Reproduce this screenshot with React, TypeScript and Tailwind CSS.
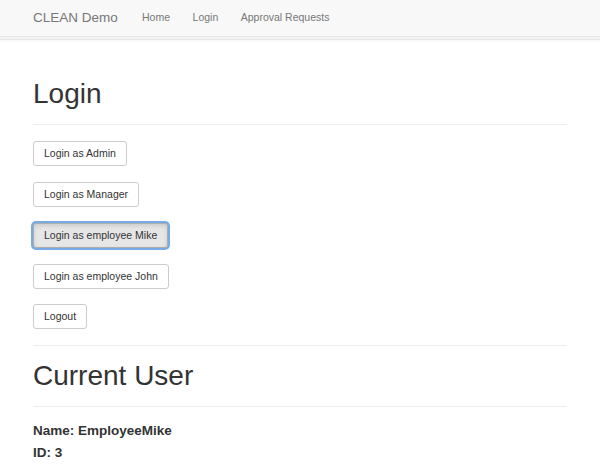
import React from 'react'

const buttons = [
  { label: 'Login as Admin', active: false },
  { label: 'Login as Manager', active: false },
  { label: 'Login as employee Mike', active: true },
  { label: 'Login as employee John', active: false },
  { label: 'Logout', active: false },
]

const navLinks = ['Home', 'Login', 'Approval Requests']

export default function App() {
  return (
    <div className="min-h-[473px] bg-white font-['Liberation_Sans',Arial,sans-serif] text-[#333]">
      {/* Navbar */}
      <div className="flex h-[37px] items-center border-b border-[#e7e7e7] bg-[#f8f8f8] pl-[33px]">
        <span className="text-[13.5px] text-[#777]">CLEAN Demo</span>
        <nav className="ml-[13px] flex items-center">
          {navLinks.map((link) => (
            <a key={link} className="px-[11.25px] text-[10.5px] text-[#777]">
              {link}
            </a>
          ))}
        </nav>
      </div>
      <div className="h-[2px] bg-[#f4f4f4]" />
      <div className="h-[1px] bg-[#e6e6e6]" />
      <div className="h-[2px] bg-[#fafafa]" />

      {/* Content */}
      <main className="px-[33px] pt-[36.5px]">
        <h1 className="text-[28px] leading-[1.1] font-medium">Login</h1>
        <hr className="mt-[15px] border-[#eee]" />

        <div className="mt-[16px] flex flex-col items-start gap-[15.75px]">
          {buttons.map((btn) => (
            <button
              key={btn.label}
              className={`rounded-[3px] border px-[10px] py-[4px] text-[10.5px] leading-[15px] text-[#333] ${
                btn.active
                  ? 'border-[#adadad] bg-[#e6e6e6] shadow-[0_0_0_2px_rgba(94,156,224,0.85),inset_0_2px_4px_rgba(0,0,0,0.12)]'
                  : 'border-[#ccc] bg-white'
              }`}
            >
              {btn.label}
            </button>
          ))}
        </div>

        <hr className="mt-[16px] border-[#eee]" />
        <h1 className="mt-[14.6px] text-[28px] leading-[1.1] font-medium">Current User</h1>
        <hr className="mt-[14.3px] border-[#eee]" />

        <div className="mt-[16.5px]">
          <p className="mb-[7px] text-[13.5px] leading-[15px] font-semibold">Name: EmployeeMike</p>
          <p className="mb-[7px] text-[13.5px] leading-[15px] font-semibold">ID: 3</p>
        </div>
      </main>
    </div>
  )
}
